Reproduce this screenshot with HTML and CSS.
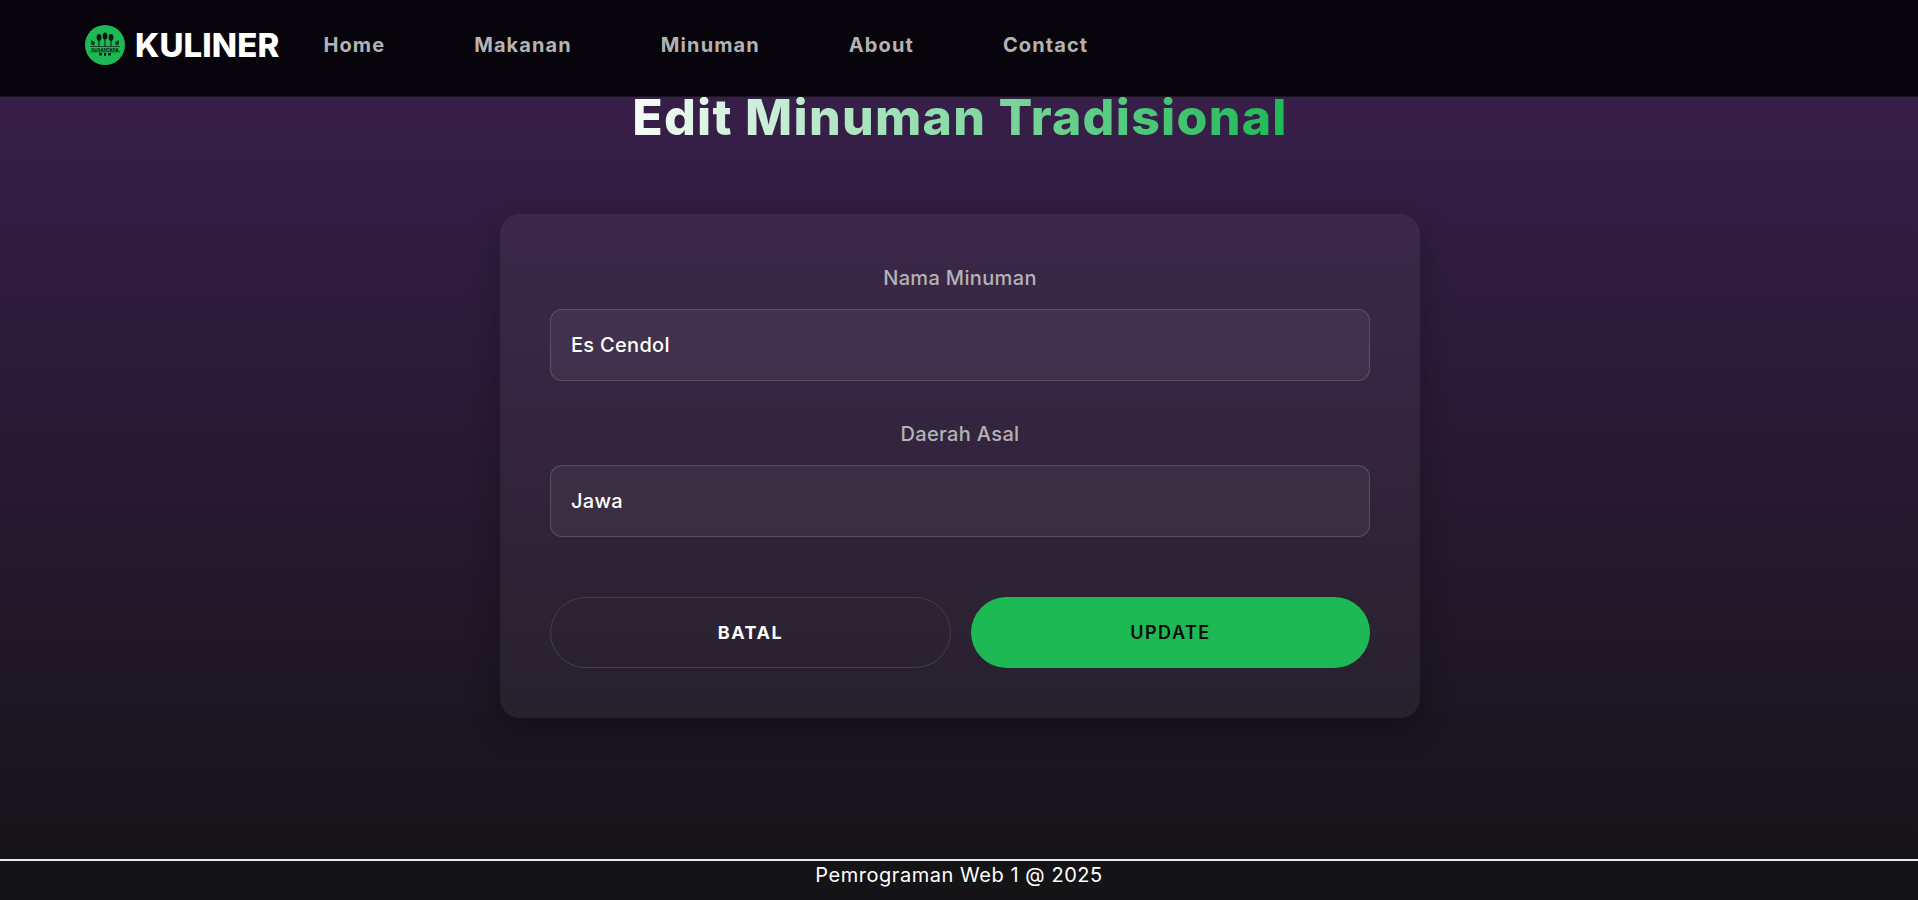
FILE: index.html
```html
<!DOCTYPE html>
<html lang="en">
<head>
    <meta charset="UTF-8">
    <meta name="viewport" content="width=device-width, initial-scale=1.0">
    <title>Edit Minuman Tradisional</title>
    <link rel="stylesheet" href="styles.css">
</head>
<body>
    <header class="navbar">
        <a class="brand" href="#">
            <svg class="brand-logo" viewBox="0 0 40 40" width="40" height="40" aria-hidden="true">
                <circle cx="20" cy="20" r="20" fill="#1db954"/>
                <g fill="#0b1a10">
                    <ellipse cx="14" cy="12.5" rx="2.4" ry="3.4"/>
                    <ellipse cx="20" cy="11" rx="2.4" ry="3.6"/>
                    <ellipse cx="26" cy="12.5" rx="2.4" ry="3.4"/>
                    <rect x="13.5" y="15" width="1" height="6"/>
                    <rect x="19.5" y="14" width="1" height="7"/>
                    <rect x="25.5" y="15" width="1" height="6"/>
                    <path d="M6 15l4 2-1 4-3-2zM34 15l-4 2 1 4 3-2z" opacity="0.75"/>
                    <rect x="5" y="21" width="30" height="0.7"/>
                    <rect x="5" y="26.5" width="30" height="0.7"/>
                    <path d="M14 28h3v2.5h-3zM19 28h2v3h-2zM23 28h3v2.5h-3z"/>
                </g>
                <text class="brand-logo-text" x="20" y="25.6" text-anchor="middle">NUSANTARA</text>
            </svg>
            <span class="brand-name">KULINER</span>
        </a>
        <nav class="nav-links">
            <a href="#">Home</a>
            <a href="#">Makanan</a>
            <a href="#">Minuman</a>
            <a href="#">About</a>
            <a href="#">Contact</a>
        </nav>
    </header>

    <main class="content">
        <h1 class="page-title">Edit Minuman Tradisional</h1>
        <form class="edit-card">
            <div class="field">
                <label for="nama">Nama Minuman</label>
                <input id="nama" type="text" value="Es Cendol">
            </div>
            <div class="field">
                <label for="daerah">Daerah Asal</label>
                <input id="daerah" type="text" value="Jawa">
            </div>
            <div class="actions">
                <a class="btn btn-cancel" href="#">BATAL</a>
                <button class="btn btn-update" type="button">UPDATE</button>
            </div>
        </form>
    </main>

    <footer class="footer">Pemrograman Web 1 @ 2025</footer>
</body>
</html>
```

FILE: styles.css
```css
* {
    box-sizing: border-box;
}
body {
    margin: 0;
    height: 900px;
    display: flex;
    flex-direction: column;
    font-family: Inter, "Open Sans", sans-serif;
    color: white;
    background: linear-gradient(to bottom, #3c2050 0%, #141316 100%);
    overflow: hidden;
}
.navbar {
    position: fixed;
    top: 0;
    left: 0;
    right: 0;
    height: 97px;
    display: flex;
    align-items: center;
    gap: 44px;
    padding: 0 85px 7px;
    background: #07040b;
    border-bottom: 1px solid #1a1520;
    z-index: 10;
}
.brand {
    display: flex;
    align-items: center;
    gap: 10px;
    color: white;
    text-decoration: none;
}
.brand-logo {
    display: block;
}
.brand-logo-text {
    font-family: "Liberation Sans", sans-serif;
    font-size: 4.4px;
    font-weight: bold;
    fill: #0b1a10;
}
.brand-name {
    font-size: 33px;
    font-weight: 800;
    letter-spacing: 0.1px;
}
.nav-links {
    display: flex;
    gap: 89px;
    padding-top: 1px;
}
.nav-links a {
    color: #b3b3b3;
    font-size: 20px;
    font-weight: 700;
    letter-spacing: 1.1px;
    text-decoration: none;
}
.content {
    flex: 1;
    display: flex;
    flex-direction: column;
    align-items: center;
    padding: 88px 0 0 2px;
}
.page-title {
    margin: 0 0 68px;
    font-size: 50px;
    line-height: 58px;
    font-weight: 800;
    letter-spacing: 1.25px;
    background: linear-gradient(to right, #f6fcf8, #1db954);
    -webkit-background-clip: text;
    background-clip: text;
    color: transparent;
}
.edit-card {
    width: 920px;
    padding: 50px;
    border-radius: 20px;
    background: rgba(255, 255, 255, 0.05);
    box-shadow: 0 10px 30px rgba(0, 0, 0, 0.3);
}
.field {
    display: flex;
    flex-direction: column;
    margin-bottom: 39px;
}
.field label {
    text-align: center;
    color: #b3b3b3;
    font-size: 20px;
    line-height: 28px;
    font-weight: 500;
    letter-spacing: 0.35px;
    margin-bottom: 17px;
}
.field input {
    height: 72px;
    padding: 0 20px;
    border: 1px solid rgba(255, 255, 255, 0.15);
    border-radius: 12px;
    background: rgba(255, 255, 255, 0.05);
    color: white;
    font-family: inherit;
    font-size: 20px;
    font-weight: 500;
    letter-spacing: 0.3px;
    outline: none;
}
.actions {
    display: flex;
    gap: 20px;
    margin-top: 60px;
}
.btn {
    flex: 1;
    height: 71px;
    padding: 0;
    display: flex;
    align-items: center;
    justify-content: center;
    border-radius: 36px;
    font-family: inherit;
    font-size: 18px;
    font-weight: 700;
    letter-spacing: 1.5px;
    text-decoration: none;
}
.btn-cancel {
    border: 1px solid rgba(255, 255, 255, 0.12);
    color: white;
}
.btn-update {
    border: none;
    background: #1db954;
    color: #0a0a0a;
    font-weight: 600;
}
.footer {
    height: 41px;
    border-top: 2px solid #e8e8e8;
    background: #141316;
    text-align: center;
    font-size: 20px;
    letter-spacing: 0.55px;
    line-height: 28px;
}
```
